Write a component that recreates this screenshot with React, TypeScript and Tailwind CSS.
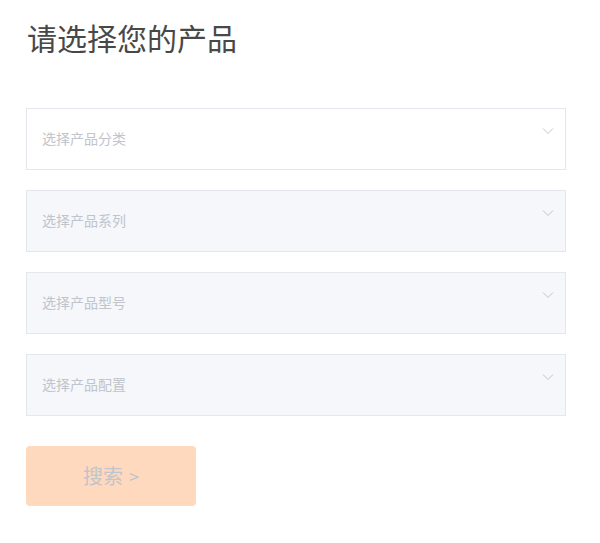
import React from "react";

const Chevron = () => (
  <svg width="12" height="8" viewBox="0 0 12 8" className="absolute right-[11px] top-[18px]" fill="none">
    <polyline points="1,1.5 6,6.5 11,1.5" stroke="#c0c4cc" strokeWidth="1" />
  </svg>
);

const Field = ({ label, white }: { label: string; white?: boolean }) => (
  <div
    className={`relative h-[62px] w-[540px] border border-[#e4e7ed] flex items-center pl-[15px] pb-[2px] ${white ? "bg-white" : "bg-[#f5f7fa]"}`}
  >
    <span className="text-[14px] text-[#c0c4cc] leading-none">{label}</span>
    <Chevron />
  </div>
);

export default function App() {
  return (
    <div
      className="w-[600px] h-[543px] bg-white pl-[26px] pt-[16px]"
      style={{ fontFamily: '"Noto Sans CJK SC", "Noto Sans", sans-serif' }}
    >
      <h1 className="text-[30px] leading-[42px] text-[#484848] font-normal pl-[1px]">请选择您的产品</h1>
      <div className="mt-[50px] flex flex-col gap-[20px]">
        <Field label="选择产品分类" white />
        <Field label="选择产品系列" />
        <Field label="选择产品型号" />
        <Field label="选择产品配置" />
      </div>
      <button className="mt-[30px] w-[170px] h-[60px] rounded-[4px] bg-[#ffd9bd] text-[#c0c4cc] text-[20px] flex items-center justify-center gap-[6px]">
        <span>搜索</span>
        <span className="text-[18px]">&gt;</span>
      </button>
    </div>
  );
}
